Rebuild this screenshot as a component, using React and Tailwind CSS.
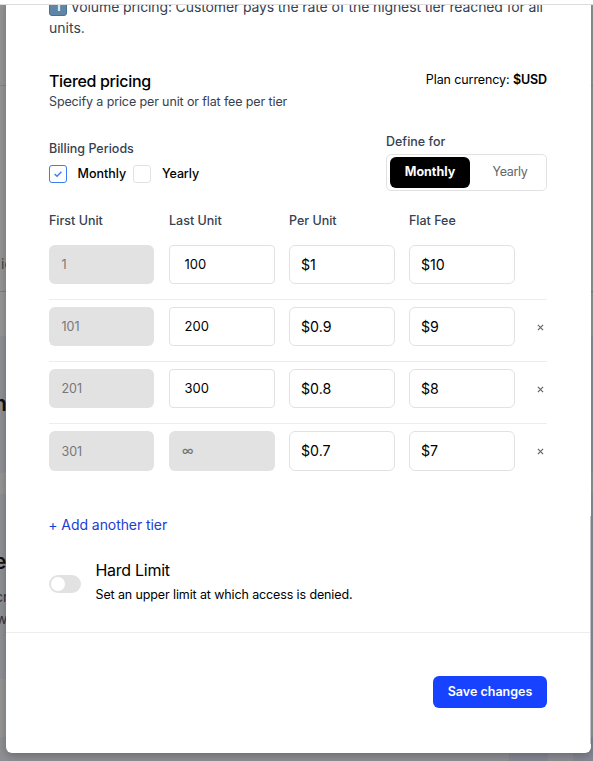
import React from 'react';

const tiers = [
  { first: '1', last: '100', unit: '$1', fee: '$10' },
  { first: '101', last: '200', unit: '$0.9', fee: '$9', removable: true },
  { first: '201', last: '300', unit: '$0.8', fee: '$8', removable: true },
  { first: '301', last: '∞', unit: '$0.7', fee: '$7', removable: true, open: true },
];

function Backdrop() {
  return (
    <div className="absolute inset-x-0 top-[5px] bottom-0 flex flex-col overflow-hidden bg-[#8f9095] whitespace-nowrap">
      <div className="h-20 shrink-0 bg-[#959595]" />
      <div className="h-[206px] shrink-0 border-t border-[#858585] bg-[#959595] pt-[168px] text-[14px] leading-5 text-[#444444]">
        <span className="ml-px">ic</span>
      </div>
      <div className="h-[45px] shrink-0 border-t border-[#7d7d7d] bg-[#979797]" />
      <div className="flex h-[137px] shrink-0 flex-col items-start pt-[54px]">
        <span className="-ml-[6px] text-[21px] leading-7 font-semibold text-[#111111]">n</span>
      </div>
      <div className="h-[21px] shrink-0 bg-[#979695]" />
      <div className="flex h-[185px] shrink-0 flex-col items-start pt-[54px]">
        <span className="-ml-[6px] text-[21px] leading-7 font-semibold text-[#111111]">e</span>
        <span className="-ml-[5px] pt-[10px] text-[14px] leading-[22px] text-[#30343e]">cr</span>
        <span className="-ml-[4px] text-[14px] leading-[22px] text-[#30343e]">w</span>
      </div>
      <div className="h-[58px] shrink-0 bg-[#979695]" />
      <div className="flex grow justify-end">
        <div className="w-[39px] bg-[#868894]" />
        <div className="w-[25px] bg-[#8e8f95]" />
        <div className="w-5 bg-[#868894]" />
      </div>
    </div>
  );
}

export default function App() {
  return (
    <div className="relative h-[761px] w-[593px] overflow-hidden bg-white font-['Inter','Liberation_Sans',sans-serif] text-black">
      <Backdrop />
      <div className="absolute inset-x-0 top-0 z-20 h-[5px] border-b border-[#dcdcdc] bg-white" />
      <div className="absolute top-0 left-[6px] flex h-[752.5px] w-[585px] flex-col overflow-hidden rounded-b-md bg-white shadow-[0_3px_10px_rgba(0,0,0,0.25)]">
        <div className="flex h-[633px] shrink-0 flex-col border-b border-[#ededed] pr-[44px] pl-[43px]">
          <div className="-mt-[4px] h-[42px] text-[14px] leading-[21px] whitespace-nowrap text-[#364152]">
            <div className="flex items-center">
              <span className="mr-[3.5px] flex h-[18px] w-[18px] shrink-0 items-center justify-center rounded-[3px] border border-[#4b6e8c] bg-[#5f86a6] text-[12px] leading-none font-semibold text-white">1</span>
              <span className="tracking-[-0.12px]">Volume pricing: Customer pays the rate of the highest tier reached for all</span>
            </div>
            <div>units.</div>
          </div>

          <div className="mt-[32px] flex h-[46px] justify-between">
            <div>
              <div className="text-[16px] leading-[23px] font-medium tracking-[-0.33px]">Tiered pricing</div>
              <div className="text-[12.5px] leading-[18px] tracking-[-0.12px] text-[#364152]">Specify a price per unit or flat fee per tier</div>
            </div>
            <div className="text-[12.5px] leading-[19px] tracking-[-0.1px]">Plan currency: <span className="font-semibold">$USD</span></div>
          </div>

          <div className="mt-[16px] flex h-[59px] justify-between">
            <div className="pt-[7px]">
              <div className="text-[12.5px] leading-[20px] font-medium text-[#364152]">Billing Periods</div>
              <div className="mt-[6px] flex h-[18px] items-center text-[12.5px] font-medium">
                <span className="flex h-[18px] w-[18px] items-center justify-center rounded-[3px] border border-[#3b7ef0]">
                  <svg width="10" height="10" viewBox="0 0 10 10" fill="none" stroke="#3b7ef0" strokeWidth="1.4"><path d="M1.6 5.1 4 7.3 8.4 2.7" /></svg>
                </span>
                <span className="ml-[10.5px] w-[55.5px]">Monthly</span>
                <span className="h-[18px] w-[18px] rounded-[3px] border border-[#e2e2e2]" />
                <span className="ml-[11px] tracking-[-0.1px]">Yearly</span>
              </div>
            </div>
            <div className="w-[161px]">
              <div className="text-[12.5px] leading-[20px] font-medium text-[#364152]">Define for</div>
              <div className="mt-[2px] flex h-[37px] rounded-[5px] border border-[#e2e2e2] p-[3px] pt-[2px]">
                <div className="flex h-[31px] w-20 items-center justify-center rounded-md bg-black text-[12.5px] font-bold text-white">Monthly</div>
                <div className="flex h-[31px] grow items-center justify-center pl-[7px] text-[12.5px] tracking-[-0.3px] text-[#666666]">Yearly</div>
              </div>
            </div>
          </div>

          <div className="mt-[20px] grid h-[20px] grid-cols-4 gap-x-[14px] pr-[32px] text-[12.5px] leading-[20px] font-medium text-[#364152]">
            <span>First Unit</span>
            <span>Last Unit</span>
            <span>Per Unit</span>
            <span>Flat Fee</span>
          </div>

          <div className="mt-[6px] flex flex-col">
            {tiers.map((t, i) => (
              <div key={t.first} className={(i > 0 ? 'border-t border-[#ededed] pt-[7px]' : 'pt-2') + ' h-[62px]'}>
                <div className={(t.open ? 'h-10' : 'h-[39px]') + ' grid grid-cols-[106px_106px_106px_106px_15px] gap-x-[14px]'}>
                  <div className="mr-px flex items-center rounded-md bg-[#e2e2e2] pt-[2px] pl-[12.5px] text-[12.5px] text-[#777777]">{t.first}</div>
                  {t.open ? (
                    <div className="flex items-center rounded-md bg-[#e2e2e2] pl-[13px] text-[12px] font-medium text-[#777777]">{t.last}</div>
                  ) : (
                    <div className="flex items-center rounded-[4px] border border-[#e2e2e2] pl-[14.5px] text-[13px]">{t.last}</div>
                  )}
                  <div className="flex items-center rounded-md border border-[#e2e2e2] pl-[11px] text-[14.2px]">{t.unit}</div>
                  <div className="flex items-center rounded-md border border-[#e2e2e2] pl-[11px] text-[14.2px]">{t.fee}</div>
                  {t.removable && (
                    <div className={(t.open ? 'pt-px' : 'pt-[2px]') + ' flex items-center justify-end'}>
                      <svg width="7" height="7" viewBox="0 0 7 7" stroke="#666666" strokeWidth="1.2"><path d="M0.9 0.9 6.1 6.1M6.1 0.9 0.9 6.1" /></svg>
                    </div>
                  )}
                </div>
              </div>
            ))}
          </div>

          <div className="mt-[30px] -ml-[0.7px] text-[14px] leading-[20px] tracking-[-0.07px] text-[#1940d2]">+ Add another tier</div>

          <div className="mt-[24px] flex">
            <div className="mt-[16px] flex h-[18px] w-8 items-center rounded-full bg-[#e2e2e2] pl-[2px]">
              <span className="h-[14px] w-[14px] rounded-full bg-white" />
            </div>
            <div className="ml-[14.5px]">
              <div className="-mt-px text-[16px] leading-[24px] tracking-[-0.28px]">Hard Limit</div>
              <div className="mt-[4px] text-[12.5px] leading-[18px] tracking-[-0.12px]">Set an upper limit at which access is denied.</div>
            </div>
          </div>
        </div>
        <div className="flex grow justify-end pt-[43px] pr-[44px]">
          <div className="flex h-8 w-[114px] items-center justify-center rounded-md bg-[#1742ff] text-[12.5px] font-semibold text-white">Save changes</div>
        </div>
      </div>
      <div className="absolute top-[516px] left-[590px] h-[228px] w-px bg-[#c2c3c8]" />
    </div>
  );
}
